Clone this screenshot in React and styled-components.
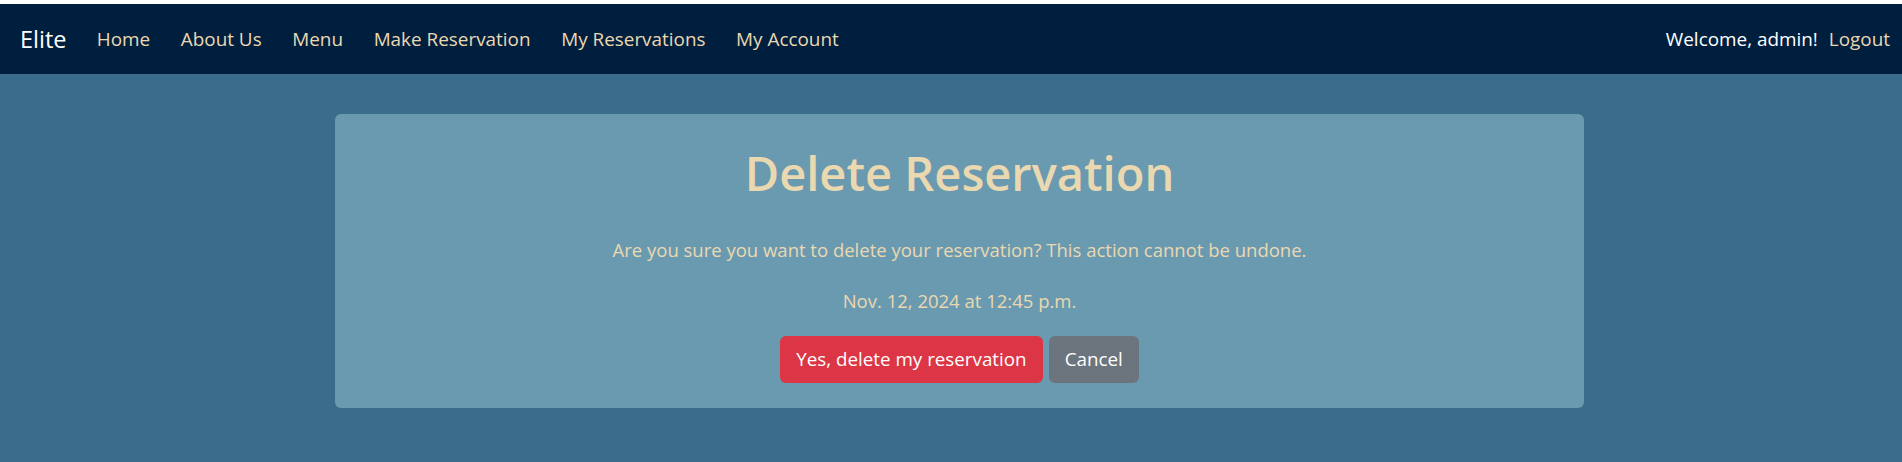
import React from "react";
import styled, { createGlobalStyle } from "styled-components";

const COLORS = {
  navy: "#001f3f",
  steel: "#3a6d8c",
  sky: "#6a9ab0",
  sand: "#ead8b1",
  danger: "#dc3545",
  secondary: "#6c757d",
};

const GlobalStyle = createGlobalStyle`
  html, body {
    margin: 0;
    padding: 0;
    background: #fff;
  }
  body {
    font-family: "Open Sans", "Noto Sans", sans-serif;
    -webkit-font-smoothing: antialiased;
  }
`;

const navLinks = ["Home", "About Us", "Menu", "Make Reservation", "My Reservations", "My Account"];

const App = () => {
  return (
    <>
      <GlobalStyle />
      <Page>
        <Navbar>
          <Brand href="#">Elite</Brand>
          <NavList>
            {navLinks.map((label) => (
              <NavLink key={label} href="#">{label}</NavLink>
            ))}
          </NavList>
          <NavRight>
            <Welcome>Welcome, admin!</Welcome>
            <NavLink href="#" $tight>Logout</NavLink>
          </NavRight>
        </Navbar>

        <Card>
          <Title>Delete Reservation</Title>
          <Text>Are you sure you want to delete your reservation? This action cannot be undone.</Text>
          <Text $gap={23}>Nov. 12, 2024 at 12:45 p.m.</Text>
          <Actions>
            <Button $variant="danger">Yes, delete my reservation</Button>
            <Button $variant="secondary">Cancel</Button>
          </Actions>
        </Card>
      </Page>
    </>
  );
};

const Page = styled.div`
  min-height: 100vh;
  background: ${COLORS.steel};
  border-top: 4px solid #fff;
  box-sizing: border-box;
`;

const Navbar = styled.nav`
  height: 70px;
  display: flex;
  align-items: center;
  background: ${COLORS.navy};
  padding: 0 12px 0 20px;
`;

const Brand = styled.a`
  color: #fff;
  font-size: 23.5px;
  text-decoration: none;
  margin-right: 15px;
`;

const NavList = styled.div`
  display: flex;
  align-items: center;
`;

const NavLink = styled.a`
  color: ${COLORS.sand};
  font-size: 18.9px;
  text-decoration: none;
  padding: 0 ${(p) => (p.$tight ? "0" : "15.3px")};
`;

const NavRight = styled.div`
  margin-left: auto;
  display: flex;
  align-items: center;
  gap: 11px;
`;

const Welcome = styled.span`
  color: #fff;
  font-size: 18.9px;
`;

const Card = styled.main`
  width: 1249px;
  margin: 40px 0 0 335px;
  box-sizing: border-box;
  padding: 31px 24px 25px;
  background: ${COLORS.sky};
  border-radius: 6px;
  text-align: center;
`;

const Title = styled.h1`
  margin: 0 0 35px;
  font-size: 47px;
  font-weight: 600;
  line-height: 1.2;
  color: ${COLORS.sand};
`;

const Text = styled.p`
  margin: ${(p) => (p.$gap ? `${p.$gap}px` : "0")} 0 0;
  font-size: 18.5px;
  line-height: 1.5;
  color: ${COLORS.sand};
`;

const Actions = styled.div`
  display: flex;
  justify-content: center;
  gap: 6px;
  margin-top: 21px;
`;

const Button = styled.button`
  height: 47px;
  padding: 0 16px;
  border: none;
  border-radius: 6px;
  font-family: inherit;
  font-size: 18.8px;
  color: #fff;
  cursor: pointer;
  background: ${(p) => (p.$variant === "danger" ? COLORS.danger : COLORS.secondary)};
`;

export default App;
